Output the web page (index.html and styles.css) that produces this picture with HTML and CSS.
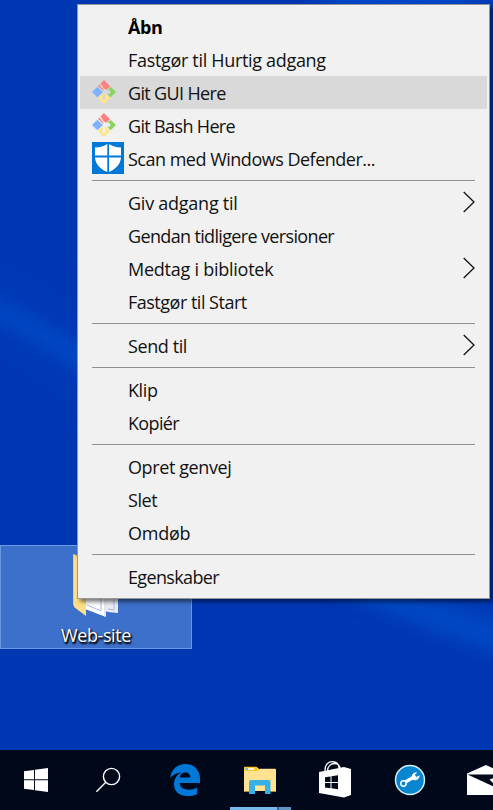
FILE: index.html
```html
<!DOCTYPE html>
<html lang="da">
<head>
<meta charset="utf-8">
<title>Skrivebord</title>
<link rel="stylesheet" href="styles.css">
</head>
<body>
<svg width="0" height="0" class="defs" aria-hidden="true">
  <symbol id="git" viewBox="0 0 24 24">
    <path fill="#ff8080" d="M12 0l6.200 6.200-3.300 3.300c-.7-.4-1.300-.4-1.900-.2l-2.600-2.600c.1-.8-.2-1.500-.9-1.900L8.300 3.700z M7.400 4.600l1.200 1.200c-.1 1 .5 1.900 1.500 2.100l1.300 1.300v1.600L6 6z"/>
    <path fill="#80b3ff" d="M5.300 6.700l5.700 5.300-5.700 5.300L0 12z"/>
    <path fill="#ffe680" d="M6 18l5-5v3.800c-1.500.8-1.300 3.500 1 3.500s2.600-2.700 1-3.500V13l5 5L12 24z"/>
    <path fill="#8dd35f" d="M18.700 6.700L24 12l-5.300 5.300-4.400-4.400.6.600c2.700 1.300 4.300-.8 3.200-2.700-.9-1.200-2.400-1-3.200-.1z"/>
  </symbol>
</svg>
<div class="desktop">
  <svg class="wallpaper" viewBox="0 0 493 810" preserveAspectRatio="none" aria-hidden="true">
    <defs>
      <filter id="soft" x="-30%" y="-60%" width="160%" height="220%"><feGaussianBlur stdDeviation="9"/></filter>
      <filter id="wide" x="-50%" y="-90%" width="200%" height="280%"><feGaussianBlur stdDeviation="28"/></filter>
    </defs>
    <rect width="493" height="810" fill="#0037b3"/>
    <ellipse cx="400" cy="-8" rx="85" ry="20" fill="#0048cc" filter="url(#soft)"/>
    <path d="M-30 270L120 370 510 600V640L120 400-30 300z" fill="#0048c6" opacity=".5" filter="url(#wide)"/>
    <path d="M-30 284L100 358 240 500 400 592 530 636V662L430 628 300 575 90 374-30 302z" fill="#0550cc" opacity=".75" filter="url(#soft)"/>
  </svg>

  <main class="workspace">
    <div class="folder">
      <svg class="folder-icon" viewBox="0 0 60 68" aria-hidden="true">
        <path fill="#e9edf4" d="M28 12h29v49l-10-1-19-7z"/>
        <path fill="#fff" d="M24 12l21 6v47l-21-8z"/>
        <path d="M44 20v45" stroke="#c9cfda"/>
        <path d="M26 53l14 6v-13M47 57l6 1v-10" fill="none" stroke="#a9bde3"/>
        <path fill="#f2c966" d="M12 2l6 2v52l-6-3z"/>
        <path fill="#ffe08a" d="M13 3l12 12v49L13 55z"/>
      </svg>
      <span class="folder-name">Web-site</span>
    </div>
  </main>

  <nav class="taskbar">
    <div class="task start"><svg width="24" height="24" viewBox="0 0 24 24"><path fill="#fff" d="M0 3.300L10 2v9.300H0zM11 1.800L24 0v11.300H11zM0 12.300h10V22L0 20.700zM11 12.300h13V24l-13-1.800z"/></svg></div>
    <div class="task search"><svg width="26" height="26" viewBox="0 0 26 26" fill="none" stroke="#fff" stroke-width="1.400"><circle cx="16.500" cy="9.500" r="8.100"/><path d="M10.800 15.300L1.400 24.800"/></svg></div>
    <div class="task"><svg width="30" height="32" viewBox="0 0 30 32"><path fill="#0078d7" d="M.2 14.200C1.300 5.600 7 0 15.300 0 24 0 30 6.100 30 14.400V19H9.700c.2 5 4.800 6.700 9.200 6.700 3.100 0 6-.8 8.300-2.200v6.700c-3 1.300-6.300 1.800-9.700 1.800C9.400 32 4 27.500 4 20.200c0-5.100 2.800-9.400 7.200-11.600C5.600 9.200 2.500 11.200.2 14.200zM9.800 13.600h10.500c0-3.500-2-5-5.100-5-3 0-4.900 1.800-5.400 5z"/></svg></div>
    <div class="task explorer"><svg width="32" height="28" viewBox="0 0 32 28"><path fill="#f9c932" d="M0 1.500Q0 .8.800.8h11.600L16 3.500V8H0z"/><path fill="#fff" d="M2 2.200h8v1.500H2z"/><path fill="#3daee9" d="M2 2.200h2v1.500H2z"/><path fill="#ffe391" d="M0 5h13.500L16 2.800h15q1 0 1 1V25H0z"/><path fill="#35b1e8" d="M5 16q0-2 2-2h17.500q2 0 2 2v12H21v-8.500H11V28H5z"/><path fill="#ddb75d" d="M0 25h5v.8H0zM26.500 25H32v.8h-5.500z"/></svg><span class="running"><i></i></span></div>
    <div class="task"><svg class="store" width="32" height="37" viewBox="0 0 32 37"><path fill="none" stroke="#fff" stroke-width="1.300" d="M6 11c-.5-7 3-10.300 7-10.300S19.800 3 20 7M8.500 10c.2-5 3.500-7.500 7-7.500 3.300 0 5.800 2.500 5.800 6"/><path fill="#fff" d="M0 11L25 6l7 2v26l-7 2.500L0 32z"/><path fill="#00081a" d="M6 16.200l5.500-.8V21H6zM12.500 15.200l6.500-1V21h-6.500zM6 22h5.500v5.200L6 26.500zM12.500 22H19v6.200l-6.500-.9z"/></svg></div>
    <div class="task"><svg width="32" height="32" viewBox="0 0 32 32"><circle cx="16" cy="16" r="14.500" fill="#0785cf" stroke="#d8edf8" stroke-width="1.500"/><path d="M10.500 18.500L20 13" stroke="#fff" stroke-width="3.200"/><circle cx="9.500" cy="19.500" r="2.700" fill="#0785cf" stroke="#fff" stroke-width="1.500"/><path fill="#fff" d="M17.800 12.600c.2-2.700 2.400-4.500 5.400-4.300l-2.400 2.600 1.700 2 3.100-1.600c.1 3.500-3.200 5.900-6.500 4.700z"/></svg></div>
    <div class="task mail"><svg width="38" height="30" viewBox="0 0 38 30"><path fill="#fff" d="M0 8.500L19 0l19 8.500V30H0z"/><path fill="#00081a" d="M.5 9.500h37L22.500 14.500 32 24z"/></svg></div>
  </nav>

  <div class="menu" role="menu">
    <div class="item default"><span class="icon"></span><span class="label">Åbn</span></div>
    <div class="item"><span class="icon"></span><span class="label loose">Fastgør til Hurtig adgang</span></div>
    <div class="item active"><span class="icon"><svg width="24" height="24"><use href="#git"/></svg></span><span class="label tight">Git GUI Here</span></div>
    <div class="item"><span class="icon"><svg width="24" height="24"><use href="#git"/></svg></span><span class="label tight">Git Bash Here</span></div>
    <div class="item"><span class="icon"><svg width="32" height="32" viewBox="0 0 32 32"><path fill="#0078d7" d="M0 0h32v32H0z"/><path fill="#fff" d="M3 5.500C8 5.500 12 4.300 15.300 2v11.500H3zM17 2c3.500 2.300 7 3.500 12 3.500v8H17zM3 15.500h12.300V30C7.500 26.500 3.500 22 3 15.500zM17 15.500h12C28.500 22 24.500 26.500 17 30z"/></svg></span><span class="label snug">Scan med Windows Defender...</span></div>
    <hr>
    <div class="item"><span class="icon"></span><span class="label looser">Giv adgang til</span><svg class="arrow" viewBox="0 0 12 22"><path d="M.7 1L11 11 .7 21"/></svg></div>
    <div class="item"><span class="icon"></span><span class="label tight">Gendan tidligere versioner</span></div>
    <div class="item"><span class="icon"></span><span class="label looser">Medtag i bibliotek</span><svg class="arrow" viewBox="0 0 12 22"><path d="M.7 1L11 11 .7 21"/></svg></div>
    <div class="item"><span class="icon"></span><span class="label snug">Fastgør til Start</span></div>
    <hr>
    <div class="item"><span class="icon"></span><span class="label">Send til</span><svg class="arrow" viewBox="0 0 12 22"><path d="M.7 1L11 11 .7 21"/></svg></div>
    <hr>
    <div class="item"><span class="icon"></span><span class="label">Klip</span></div>
    <div class="item"><span class="icon"></span><span class="label tight">Kopiér</span></div>
    <hr>
    <div class="item"><span class="icon"></span><span class="label">Opret genvej</span></div>
    <div class="item"><span class="icon"></span><span class="label">Slet</span></div>
    <div class="item"><span class="icon"></span><span class="label looser">Omdøb</span></div>
    <hr>
    <div class="item"><span class="icon"></span><span class="label tight">Egenskaber</span></div>
  </div>
</div>
</body>
</html>
```
FILE: styles.css
```css
* { box-sizing: border-box; }

body {
  margin: 0;
  overflow: hidden;
  font-family: "Open Sans", "Noto Sans", sans-serif;
  font-size: 18px;
}

svg { display: block; flex: none; }
.defs { position: absolute; }

.desktop {
  position: relative;
  display: flex;
  flex-direction: column;
  height: 810px;
  overflow: hidden;
  background: #0037b3;
}

.wallpaper {
  position: absolute;
  inset: 0;
  width: 100%;
  height: 100%;
}

.workspace {
  position: relative;
  flex: 1;
  display: flex;
  align-items: flex-end;
  padding-bottom: 101px;
}

.folder {
  display: flex;
  flex-direction: column;
  align-items: center;
  width: 192px;
  height: 104px;
  padding-top: 6px;
  border: 1px solid #6c98dd;
  background: #3c70ca;
}

.folder-icon { width: 60px; height: 68px; margin-right: 10px; }

.folder-name {
  line-height: 30px;
  letter-spacing: -0.4px;
  color: #fff;
  text-shadow: 1px 1px 2px #000, 1px 2px 2px #000;
}

.taskbar {
  position: relative;
  display: flex;
  height: 60px;
  background: #00081a;
}

.task {
  position: relative;
  display: flex;
  flex: none;
  align-items: center;
  justify-content: center;
  width: 75px;
}

.task.start { width: 72px; }
.task.search { width: 72px; margin-right: 3px; }
.task.mail { padding-left: 3px; }
.explorer svg { margin-left: 1px; }
.store { margin-bottom: 2px; }

.running {
  position: absolute;
  bottom: 0;
  left: 8px;
  display: flex;
  justify-content: flex-end;
  width: 61px;
  height: 3px;
  background: #76b9ed;
}

.running i {
  width: 14px;
  border-left: 2px solid #40678a;
  background: #6095c2;
}

.menu {
  position: absolute;
  top: 4px;
  left: 77px;
  width: 413px;
  padding: 5px 2px;
  border: 1px solid #979797;
  background: #f1f1f1;
  box-shadow: 3px 3px 4px rgba(0, 0, 0, 0.5);
  color: #111;
}

.item {
  display: flex;
  align-items: center;
  height: 33px;
  padding: 0 12px;
  line-height: 33px;
  white-space: nowrap;
}

.icon { flex: none; width: 36px; }
.icon svg { margin-top: -1px; }

.label { padding-top: 2px; letter-spacing: -0.4px; }
.loose { letter-spacing: -0.32px; }
.looser { letter-spacing: -0.25px; }
.snug { letter-spacing: -0.5px; }
.tight { letter-spacing: -0.65px; }

.default { font-weight: 700; color: #000; }
.active { background: #d9d9d9; }

.arrow {
  width: 12px;
  height: 22px;
  margin: -1px 0 0 auto;
  fill: none;
  stroke: #111;
  stroke-width: 1.3;
}

hr {
  height: 1px;
  margin: 5px 12px;
  border: 0;
  background: #919191;
}
```
